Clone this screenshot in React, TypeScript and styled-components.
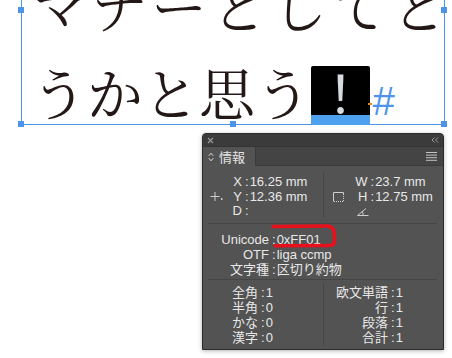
import styled, { createGlobalStyle } from "styled-components";

const GlobalStyle = createGlobalStyle`
  html, body {
    margin: 0;
    padding: 0;
    background: #ffffff;
  }
  body {
    width: 452px;
    height: 358px;
    overflow: hidden;
    font-family: "Liberation Sans", "Noto Sans CJK JP", sans-serif;
  }
`;

const Page = styled.div`
  display: flex;
  flex-direction: column;
`;

/* テキストフレーム（上端は画面外） */
const Frame = styled.div`
  position: relative;
  box-sizing: border-box;
  width: 424px;
  height: 175px;
  margin: -50px 0 0 21px;
  padding: 11px 0 0 9px;
  border: 1px solid #4d94e8;
  border-top: none;
  font-family: "Noto Serif CJK JP", "Noto Sans CJK JP", serif;
  font-size: 56px;
  color: #231815;
`;

const Line = styled.div<{ $spacing?: number }>`
  display: flex;
  align-items: flex-start;
  height: 87px;
  line-height: 87px;
  white-space: nowrap;
  letter-spacing: ${({ $spacing }) => $spacing ?? 0}px;
`;

const Handle = styled.span<{ $left: number; $top: number }>`
  position: absolute;
  left: ${({ $left }) => $left}px;
  top: ${({ $top }) => $top}px;
  width: 6px;
  height: 6px;
  background: #4d94e8;
`;

const CharBox = styled.span`
  position: relative;
  box-sizing: border-box;
  display: flex;
  justify-content: center;
  width: 59px;
  height: 59px;
  margin-top: 18px;
  background: #000;
  border-radius: 2px 2px 0 0;
  border-bottom: 10px solid #4ea1ee;
  color: #d6dbdf;
  font-family: "Noto Sans CJK JP", sans-serif;
  font-size: 52px;
  line-height: 52px;

  &::after {
    content: "";
    position: absolute;
    left: 57px;
    top: 37px;
    width: 4px;
    height: 2px;
    background: #e08a2c;
  }
`;

const Hash = styled.span`
  margin: 33px 0 0 2px;
  font-family: "Liberation Sans", sans-serif;
  font-style: italic;
  font-size: 40px;
  line-height: 40px;
  color: #4e95ea;
`;

/* 情報パネル */
const Panel = styled.div`
  box-sizing: border-box;
  display: flex;
  flex-direction: column;
  width: 242px;
  height: 217px;
  margin: 8px 0 0 202px;
  background: #535353;
  border: 1px solid #2b2b2b;
  border-radius: 4px 4px 0 0;
  box-shadow: 0 1px 4px rgba(0, 0, 0, 0.3);
  color: #e8e8e8;
  font-size: 13px;
  overflow: hidden;
`;

const TitleBar = styled.div`
  box-sizing: border-box;
  display: flex;
  justify-content: space-between;
  align-items: center;
  height: 13px;
  padding: 0 4px;
  background: #3b3b3b;
  border-bottom: 1px solid #343434;
`;

const TabRow = styled.div`
  display: flex;
  height: 19px;
  background: #444444;
`;

const Tab = styled.div`
  display: flex;
  align-items: center;
  gap: 5px;
  width: 53px;
  padding-left: 5px;
  box-sizing: border-box;
  background: #535353;
  border-right: 1px solid #3a3a3a;
  color: #e4e4e4;
`;

const TabFill = styled.div`
  flex: 1;
  display: flex;
  justify-content: flex-end;
  align-items: center;
  padding-right: 6px;
  border-bottom: 1px solid #3a3a3a;
`;

const Split = styled.div<{ $height: number }>`
  display: grid;
  grid-template-columns: 120px 1px 1fr;
  height: ${({ $height }) => $height}px;
`;

const VDivider = styled.div<{ $top: number; $bottom: number }>`
  margin: ${({ $top }) => $top}px 0 ${({ $bottom }) => $bottom}px;
  background: #464646;
`;

const HDivider = styled.div`
  height: 1px;
  margin: 0 6px 0 5px;
  background: #464646;
`;

const Half = styled.div<{ $pad: number; $top: number }>`
  display: flex;
  align-items: flex-start;
  padding: ${({ $top }) => $top}px 0 0 ${({ $pad }) => $pad}px;
`;

const IconSlot = styled.div<{ $top: number; $gap: number }>`
  display: flex;
  margin: ${({ $top }) => $top}px ${({ $gap }) => $gap}px 0 0;
`;

const Rows = styled.div<{ $lh: number }>`
  display: flex;
  flex-direction: column;
  line-height: ${({ $lh }) => $lh}px;
`;

const Row = styled.div`
  display: flex;
  white-space: nowrap;
`;

const Key = styled.span<{ $w: number }>`
  display: inline-block;
  width: ${({ $w }) => $w}px;
  text-align: right;
`;

const Colon = styled.span`
  margin: 0 1px 0 3px;
`;

const Block = styled.div`
  position: relative;
  height: 55px;
  padding-top: 8px;
  box-sizing: border-box;
`;

const Scribble = styled.svg`
  position: absolute;
  left: 0;
  top: 0;
  overflow: visible;
`;

function KV({ k, v, w }: { k: string; v: string; w: number }) {
  return (
    <Row>
      <Key $w={w}>{k}</Key>
      <Colon>:</Colon>
      <span>{v}</span>
    </Row>
  );
}

const stroke = "#cfcfcf";

export default function App() {
  return (
    <>
      <GlobalStyle />
      <Page>
        <Frame>
          <Line $spacing={4}>マナーとしてと</Line>
          <Line>
            <span>うかと思う</span>
            <CharBox>！</CharBox>
            <Hash>#</Hash>
          </Line>
          <Handle $left={-4} $top={57} />
          <Handle $left={419} $top={57} />
          <Handle $left={-4} $top={171} />
          <Handle $left={208} $top={171} />
          <Handle $left={419} $top={171} />
        </Frame>

        <Panel>
          <TitleBar>
            <svg width="7" height="7" viewBox="0 0 7 7">
              <path d="M1 1L6 6M6 1L1 6" stroke="#9a9a9a" strokeWidth="1.1" />
            </svg>
            <svg width="8" height="6" viewBox="0 0 8 6">
              <path d="M3.5 0.5L1 3l2.5 2.5M7 0.5L4.5 3 7 5.5" stroke="#9a9a9a" fill="none" strokeWidth="1" />
            </svg>
          </TitleBar>
          <TabRow>
            <Tab>
              <svg width="6" height="10" viewBox="0 0 6 10">
                <path d="M0.8 3.8L3 1.2l2.2 2.6M0.8 6.2L3 8.8l2.2-2.6" stroke="#dcdcdc" fill="none" strokeWidth="1" />
              </svg>
              <span>情報</span>
            </Tab>
            <TabFill>
              <svg width="11" height="9" viewBox="0 0 11 9">
                <path d="M0 0.5h11M0 3.1h11M0 5.7h11M0 8.3h11" stroke="#c4c4c4" strokeWidth="1" />
              </svg>
            </TabFill>
          </TabRow>

          <Split $height={57}>
            <Half $pad={7} $top={9}>
              <IconSlot $top={17} $gap={9}>
                <svg width="13" height="10" viewBox="0 0 13 10">
                  <path d="M0.5 4.5h9M5 0v9" stroke={stroke} strokeWidth="1" />
                  <rect x="11" y="6" width="1.4" height="2" fill={stroke} />
                </svg>
              </IconSlot>
              <Rows $lh={14.5}>
                <KV k="X" v="16.25 mm" w={10} />
                <KV k="Y" v="12.36 mm" w={10} />
                <KV k="D" v="" w={10} />
              </Rows>
            </Half>
            <VDivider $top={6} $bottom={5} />
            <Half $pad={9} $top={9}>
              <IconSlot $top={17} $gap={11}>
                <svg width="11" height="10" viewBox="0 0 11 10">
                  <path d="M0.5 0.5V9.5M0.5 0.5H10.5V3" stroke={stroke} strokeWidth="1" fill="none" />
                  <path d="M1 9.5H10.5V3.5" stroke={stroke} strokeWidth="1" strokeDasharray="1 1" fill="none" />
                </svg>
              </IconSlot>
              <Rows $lh={14.5}>
                <KV k="W" v="23.7 mm" w={12.5} />
                <KV k="H" v="12.75 mm" w={12.5} />
                <Row>
                  <svg width="12" height="14" viewBox="0 0 12 14" style={{ marginLeft: 2 }}>
                    <path d="M0.5 11.5H11.5M0.5 11.5L9 4.5M6 11.5Q6.5 9 5 7.3" stroke={stroke} strokeWidth="1" fill="none" />
                  </svg>
                </Row>
              </Rows>
            </Half>
          </Split>

          <HDivider />

          <Block>
            <Rows $lh={15}>
              <KV k="Unicode" w={66} v="0xFF01" />
              <KV k="OTF" w={66} v="liga ccmp" />
              <KV k="文字種" w={66} v="区切り約物" />
            </Rows>
            <Scribble width="140" height="26" viewBox="0 0 140 26">
              <path
                d="M70 2.5L124 2C130 2 131.5 6 131.5 12L131.5 17.5C131.5 21 129 21.5 126 21.5L72 21.8"
                stroke="#e8101a"
                strokeWidth="3.6"
                strokeLinecap="round"
                fill="none"
              />
            </Scribble>
          </Block>

          <HDivider />

          <Split $height={69}>
            <Half $pad={0} $top={5}>
              <Rows $lh={15}>
                <KV k="全角" v="1" w={55} />
                <KV k="半角" v="0" w={55} />
                <KV k="かな" v="0" w={55} />
                <KV k="漢字" v="0" w={55} />
              </Rows>
            </Half>
            <VDivider $top={3} $bottom={4} />
            <Half $pad={0} $top={5}>
              <Rows $lh={15}>
                <KV k="欧文単語" v="1" w={64} />
                <KV k="行" v="1" w={64} />
                <KV k="段落" v="1" w={64} />
                <KV k="合計" v="1" w={64} />
              </Rows>
            </Half>
          </Split>
        </Panel>
      </Page>
    </>
  );
}
